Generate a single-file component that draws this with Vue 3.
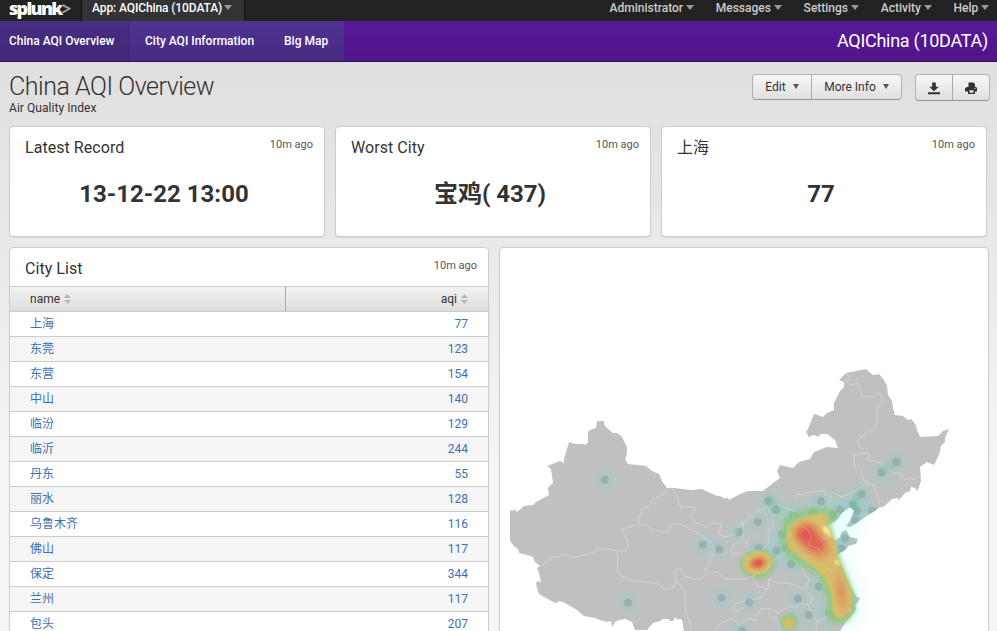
<script setup>
const menus = ['Administrator', 'Messages', 'Settings', 'Activity', 'Help']
const tabs = ['China AQI Overview', 'City AQI Information', 'Big Map']
const cards = [
  { title: 'Latest Record', value: '13-12-22 13:00' },
  { title: 'Worst City', value: '宝鸡( 437)' },
  { title: '上海', value: '77' },
]
const rows = [
  ['上海', 77], ['东莞', 123], ['东营', 154], ['中山', 140], ['临汾', 129],
  ['临沂', 244], ['丹东', 55], ['丽水', 128], ['乌鲁木齐', 116], ['佛山', 117],
  ['保定', 344], ['兰州', 117], ['包头', 207],
]
const china = 'M510 511L512 510L514 511L515 509L517 512L524 506L533 505L536 502L549 495L548 488L550 486L553 483L551 469L549 467L547 466L560 461L564 463L564 459L569 442L575 444L583 444L586 445L588 442L588 432L590 430L596 428L597 421L604 421L604 424L607 428L613 433L617 433L622 437L625 443L627 447L627 454L625 459L628 464L646 466L652 471L659 474L662 481L667 488L674 488L692 490L702 489L706 491L717 496L720 496L725 499L727 497L729 500L740 494L748 491L763 491L773 483L780 478L777 471L780 465L793 468L799 462L810 459L814 452L827 447L838 448L835 440L827 434L820 434L819 437L814 435L809 437L806 432L808 429L814 414L818 415L823 417L827 413L834 410L834 403L840 391L844 387L844 382L839 380L846 373L866 369L868 371L873 375L879 374L884 380L887 386L888 395L892 401L893 408L895 415L903 416L908 420L911 419L916 425L917 430L920 437L938 436L943 431L949 429L945 438L945 442L941 446L940 452L936 461L934 465L927 462L920 467L921 481L919 487L917 491L915 488L911 487L910 491L905 493L899 500L898 498L892 499L888 503L883 507L880 507L875 511L868 515L858 522L850 527L846 526L850 521L854 511L850 507L842 513L837 520L830 524L824 526L824 531L828 532L830 537L835 541L840 537L842 532L846 530L848 534L850 537L858 539L856 544L848 546L845 550L840 553L837 556L837 561L840 563L843 569L848 582L850 586L854 593L857 597L860 598L858 602L855 605L856 609L854 613L848 619L845 623L840 631L684 631L683 626L682 620L679 619L677 620L676 617L672 622L668 619L663 619L660 621L653 623L647 630L635 630L632 622L625 619L619 620L615 622L612 627L611 621L607 622L600 620L595 618L590 617L584 616L577 610L563 602L559 601L557 603L553 602L539 594L537 588L536 583L538 581L541 582L539 573L537 568L540 566L535 562L533 557L527 555L519 553L518 549L514 546L511 542L510 541Z'
const borders = [
  'M540 566L546 563L551 557L560 557L565 554L571 557L580 556L592 553L597 550L605 548L616 551L625 551L629 544L627 540L623 533L622 529L630 527L640 524L638 521L642 509L648 507L653 500L666 492L667 488',
  'M616 551L618 556L617 570L620 575L630 580L646 582L656 583L663 588L668 589L674 586L676 581L682 587L685 595L686 614L689 620L692 631',
  'M640 524L646 525L651 530L660 531L668 533L672 524L680 524L689 529L697 532L704 537L711 542L715 550L711 559L708 566',
  'M672 488L677 497L681 508L685 507L694 507L694 512L690 516L696 523L700 524L706 527L712 523L719 524L722 523L718 534L724 537L734 535L739 527L743 521L744 529L742 540L735 544L731 550L733 555L740 553L748 558',
  'M676 581L675 571L680 568L684 576L693 579L701 579L706 575L705 568L711 574L717 571L724 579L744 579L754 576L756 570',
  'M795 499L797 494L804 495L807 493L815 492L824 490L826 495L832 498L828 506L833 509M835 494L843 497L852 493L857 490L866 483L874 485L876 492L880 505',
  'M847 373L849 378L846 382L851 385L858 383L860 390L862 397L874 396L879 393L883 399L877 410L877 422L873 430L868 431L857 441L861 449L864 448M863 453L869 453L868 460L875 461L889 468L892 472L895 474L899 472L903 480L909 478L916 480M863 453L855 455L854 458L854 465L861 469L863 480L869 483',
  'M740 526L747 520L755 514L766 506L769 510L774 515L773 526L768 532L769 543L759 552L750 550L747 547L746 541',
  'M777 502L784 508L794 510L793 519L788 526L790 535L784 541L787 552L777 557L770 565L765 572L754 574L752 579',
  'M754 578L757 586L767 589L764 595L758 599L751 600L746 606L737 611L732 608L736 604L747 600M768 589L769 579L776 583L788 583L797 586L804 589L810 580L804 574L803 570L808 569L822 574L827 568L832 570L838 565',
  'M758 615L761 609L769 608L779 613L788 606L797 608L799 604L808 604L811 611L817 621L826 617L830 610L841 609L852 611M810 604L813 598L806 591M780 631L777 619L770 616L768 612M817 621L816 631M715 631L721 623L732 618L739 625L748 618L757 621',
  'M793 516L797 524L807 529L812 538L808 545L819 549L825 558L832 557M803 521L811 517L817 518L821 526L817 534L827 540L834 549M830 525L823 528L826 537L819 543M820 549L812 555L805 557L809 566',
]
const cities = [
  [604.7, 479.7], [703, 544.7], [719, 549], [739, 532], [628, 602.7], [721.7, 597.7], [749, 602.5], [742, 631],
  [896.7, 461.7], [881, 472.7], [861.7, 494.3], [768.3, 500.7], [776, 510], [821, 501.3], [840, 509.5], [853, 504.7],
  [872, 510.8], [758, 522], [793, 516], [813, 512.7], [832.7, 515], [855, 520], [857, 511], [782, 534.3], [785.7, 547.7],
  [776.7, 550.7], [759, 548.3], [791, 564], [818.7, 586.7], [798, 598.7], [809, 615], [829, 613], [845, 538.5], [841.7, 548.5], [788, 622.7],
]
</script>

<template>
  <div class="page">
    <header class="topbar">
      <div class="brand"><b>splunk</b><svg width="9" height="12" viewBox="0 0 9 12"><path d="M0.500 2L7.500 5.700L0.500 9.600" /></svg></div>
      <div class="app-menu">App: AQIChina (10DATA)<i class="caret" /></div>
      <nav class="menus">
        <span v-for="m in menus" :key="m">{{ m }}<i class="caret" /></span>
      </nav>
    </header>
    <div class="navbar">
      <nav class="tabs">
        <span v-for="(t, i) in tabs" :key="t" :class="['tab', { active: i === 0 }]">{{ t }}</span>
      </nav>
      <div class="app-name">AQIChina (10DATA)</div>
    </div>
    <main>
      <div class="heading">
        <div>
          <h1>China AQI Overview</h1>
          <p>Air Quality Index</p>
        </div>
        <div class="actions">
          <div class="group">
            <button class="edit">Edit<i class="caret" /></button>
            <button class="more">More Info<i class="caret" /></button>
          </div>
          <div class="group icons">
            <button><svg width="12" height="13" viewBox="0 0 12 13"><path d="M4.2 0.5h3.6v4.2h3L6 9.3L1.200 4.700h3zM0 10.300h12v2H0z" /></svg></button>
            <button><svg width="12" height="13" viewBox="0 0 12 13"><path fill-rule="evenodd" d="M3.500 0.500h5L10 2v3h1l1 1v3.500h-2V12H3V9.500H0V6.500L1.500 5h2zM4.500 8.300v2.500h4V8.300zM9.500 6v1h1V6z" /></svg></button>
          </div>
        </div>
      </div>
      <div class="cards">
        <section v-for="c in cards" :key="c.title" class="panel card">
          <div class="panel-head"><h2>{{ c.title }}</h2><time>10m ago</time></div>
          <strong>{{ c.value }}</strong>
        </section>
      </div>
      <div class="lower">
        <section class="panel list">
          <div class="panel-head"><h2>City List</h2><time>10m ago</time></div>
          <div class="row thead">
            <span class="name">name<svg class="sort" viewBox="0 0 7 10"><path d="M3.500 0L7 4H0zM3.500 10L0 6h7z" /></svg></span>
            <span class="aqi">aqi<svg class="sort" viewBox="0 0 7 10"><path d="M3.500 0L7 4H0zM3.500 10L0 6h7z" /></svg></span>
          </div>
          <div v-for="r in rows" :key="r[0]" class="row body-row">
            <span class="name">{{ r[0] }}</span><span class="aqi">{{ r[1] }}</span>
          </div>
        </section>
        <section class="panel map">
          <svg width="488" height="383" viewBox="500 248 488 383">
            <defs>
              <clipPath id="land"><path :d="china" /></clipPath>
              <radialGradient id="halo">
                <stop offset="0" stop-color="#80c8c8" stop-opacity=".32" />
                <stop offset=".5" stop-color="#88d0d0" stop-opacity=".18" />
                <stop offset="1" stop-color="#90e0e0" stop-opacity="0" />
              </radialGradient>
              <radialGradient id="hot">
                <stop offset="0" stop-color="#e0484f" stop-opacity=".97" />
                <stop offset=".4" stop-color="#e25c50" stop-opacity=".75" />
                <stop offset="1" stop-color="#e29a58" stop-opacity="0" />
              </radialGradient>
              <filter id="b8" x="-50%" y="-50%" width="200%" height="200%"><feGaussianBlur stdDeviation="7" /></filter>
              <filter id="b3" x="-50%" y="-50%" width="200%" height="200%"><feGaussianBlur stdDeviation="2.200" /></filter>
              <filter id="b1" x="-50%" y="-50%" width="200%" height="200%"><feGaussianBlur stdDeviation="1" /></filter>
            </defs>
            <path class="glow" filter="url(#b8)" d="M774 500L800 498L862 488L868 508L862 525L847 546L846 560L862 588L863 612L850 631L817 631L814 590L802 576L775 557Z" />
            <path :d="china" fill="#c0c0c0" />
            <g clip-path="url(#land)">
              <path class="land-glow" filter="url(#b8)" d="M774 500L800 498L862 488L868 508L862 525L847 546L846 560L862 588L863 612L850 631L817 631L814 590L802 576L775 557Z" />
              <path v-for="b in borders" :key="b" :d="b" class="border" />
              <circle v-for="(p, i) in cities" :key="'h' + i" :cx="p[0]" :cy="p[1]" r="16" fill="url(#halo)" />
              <circle v-for="(p, i) in cities" :key="'c' + i" :cx="p[0]" :cy="p[1]" r="4" class="city" />
              <path class="link" filter="url(#b3)" d="M767 499L779 512M861 492L851 509M882 472L897 461" />
            </g>
            <path class="green" filter="url(#b3)" d="M783 520L793 512L815 508L833 509L838 515L831 524L836 543L840 556L846 571L854 591L856 610L848 622L832 624L827 616L827 598L819 577L804 568L785 555L780 540Z" />
            <ellipse class="green" filter="url(#b3)" cx="757.500" cy="564" rx="17.500" ry="15" />
            <circle class="green" filter="url(#b3)" cx="789" cy="622" r="9" />
            <path class="yellow" filter="url(#b1)" d="M791 524L802 517L820 513L828 516L827 525L834 539L837 551L838 561L846 577L852 594L851 611L844 618L836 618L832 610L832 597L825 579L815 568L801 558L788 547L786 535Z" />
            <path class="pale" filter="url(#b1)" d="M823 525L829 529L831 538L823 532ZM835 560L838 561L840 566L835 564Z" />
            <ellipse class="yellow" filter="url(#b1)" cx="757.500" cy="563" rx="14.500" ry="11.500" transform="rotate(-12 757 563)" />
            <circle class="yellow" filter="url(#b1)" cx="788.500" cy="623" r="5.500" />
            <ellipse cx="813" cy="541" rx="28" ry="17" fill="url(#hot)" transform="rotate(45 813 541)" />
            <ellipse cx="806" cy="534" rx="17" ry="16" fill="url(#hot)" opacity=".8" />
            <ellipse cx="758" cy="563" rx="12" ry="9" fill="url(#hot)" transform="rotate(-15 758 563)" />
            <ellipse cx="841" cy="592" rx="10" ry="30" fill="url(#hot)" opacity=".35" transform="rotate(-10 841 592)" />
            <g opacity=".35"><path v-for="b in borders" :key="'o' + b" :d="b" class="border" /></g>
          </svg>
        </section>
      </div>
    </main>
  </div>
</template>

<style>
body { margin: 0; overflow: hidden; }
</style>

<style scoped>
.page { width: 997px; height: 631px; overflow: hidden; display: flex; flex-direction: column; background: linear-gradient(#dfdfdf 62px, #e9e9e9 245px, #f5f5f5 470px); color: #333; font: 12px Roboto, "Noto Sans CJK SC", sans-serif; }
.caret { display: inline-block; border: 4px solid transparent; border-top: 5px solid #999; border-bottom: 0; margin-left: 2px; vertical-align: 2px; }
.topbar { height: 21px; flex: none; display: flex; background: #222; color: #ccc; font-weight: 500; line-height: 16px; }
.brand { width: 81px; box-sizing: border-box; padding-left: 9px; color: #fff; display: flex; font: 700 18px/16px "Open Sans", sans-serif; letter-spacing: -1.7px; }
.brand svg { margin: 3px 0 0 1px; fill: none; stroke: #999; stroke-width: 2; }
.app-menu { box-sizing: border-box; width: 164px; padding-left: 10px; background: #333; border-left: 1px solid #111; border-right: 1px solid #111; color: #fff; white-space: nowrap; letter-spacing: -.1px; }
.menus { margin-left: auto; display: flex; gap: 22px; padding-right: 8px; }
.menus .caret { margin-left: 2.700px; }
.navbar { height: 41px; box-sizing: border-box; flex: none; display: flex; justify-content: space-between; background: linear-gradient(#58189a, #4f1587); border-bottom: 1px solid #390f63; color: #fff; line-height: 39px; }
.tabs { display: flex; background: linear-gradient(#503293, #472c80); font-weight: 500; line-height: 40px; }
.tab { box-sizing: border-box; padding-left: 15px; width: 139px; white-space: nowrap; }
.tab.active { width: 130px; padding-left: 9px; background: linear-gradient(#482d84, #402873); }
.tab:last-child { width: 75px; }
.app-name { font-size: 18px; letter-spacing: -.28px; padding-right: 9px; }
main { padding: 0 8px 0 9px; }
.heading { height: 64px; display: flex; justify-content: space-between; }
h1 { margin: 11px 0 0; font-size: 25px; line-height: 28px; font-weight: 300; letter-spacing: -.48px; white-space: nowrap; }
p { margin: 0; line-height: 15px; letter-spacing: .05px; }
.actions { display: flex; gap: 13px; padding: 12px 0 0; margin-right: -1px; }
.group { display: flex; height: 26px; box-sizing: border-box; border: 1px solid #b3b3b3; border-bottom-color: #999; border-radius: 4px; background: linear-gradient(#f7f7f7, #dfdfdf); }
button { border: 0; background: none; padding: 0; color: #333; font: inherit; white-space: nowrap; }
button + button { border-left: 1px solid #aaa; }
button .caret { border-width: 5px 3.500px 0; border-top-color: #555; margin-left: 7px; }
.edit { width: 58px; }
.more { width: 90px; }
.icons { height: 27px; }
.icons button { width: 36px; display: flex; align-items: center; justify-content: center; padding-top: 1px; }
.icons button + button { width: 37px; }
.icons button svg { fill: #333; }
.panel { box-sizing: border-box; background: #fff; border: 1px solid #ccc; border-radius: 4px; overflow: hidden; box-shadow: 0 1px 1px #0001; }
.cards { display: grid; grid-template-columns: 316px 316px 326px; gap: 10px; }
.card { height: 111px; text-align: center; }
.panel-head { display: flex; justify-content: space-between; padding: 10px 11px 0 15px; height: 38px; box-sizing: border-box; }
h2 { margin: 1px 0 0; font-size: 16px; line-height: 20px; font-weight: 400; letter-spacing: .05px; }
time { font-size: 11px; line-height: 15px; color: #555; }
.card strong { display: block; font-size: 24px; line-height: 28px; margin-top: 15px; padding-right: 6px; }
.lower { display: grid; grid-template-columns: 480px 490px; gap: 10px; margin-top: 10px; }
.list, .map { height: 410px; }
.row { display: flex; box-sizing: border-box; height: 25px; line-height: 24px; border-bottom: 1px solid #ccc; color: #3d70b2; }
.thead { height: 26px; border-top: 1px solid #ccc; background: linear-gradient(#f2f2f2, #dedede); color: #333; }
.body-row:nth-child(even) { background: #f5f5f5; }
.name { box-sizing: border-box; width: 275px; padding-left: 20px; }
.thead .name { width: 276px; border-right: 1px solid #aaa; }
.aqi { flex: 1; text-align: right; padding-right: 20px; }
.sort { width: 7px; height: 10px; margin-left: 4px; fill: #b5b5b5; vertical-align: -1px; }
.map svg { display: block; }
.border { fill: none; stroke: #d6d6d6; stroke-width: .7; }
.city { fill: #84a2a2; fill-opacity: .55; }
.glow { fill: #c4fff2; opacity: .38; }
.land-glow { fill: #8cd0bd; opacity: .2; }
.link { fill: none; stroke: #73b98e; stroke-width: 7; opacity: .35; }
.green { fill: #86c970; opacity: .7; }
.yellow { fill: #dfbd68; opacity: .9; }
.pale { fill: #fff09a; opacity: .85; }
</style>
